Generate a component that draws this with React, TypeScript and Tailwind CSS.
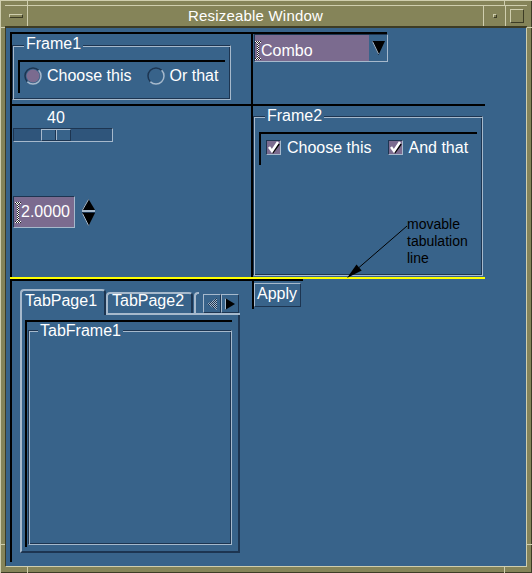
import React from "react";

// Tk-style colours
// blue #38638a, light bevel #a6b9cc, dark bevel #1d3551, entry #7b6b8f

const GROOVE =
  "border border-t-[#1d3551] border-l-[#1d3551] border-b-[#a6b9cc] border-r-[#a6b9cc] shadow-[inset_1px_1px_0_#a6b9cc,inset_-1px_-1px_0_#1d3551]";
const RAISED =
  "border border-t-[#a6b9cc] border-l-[#a6b9cc] border-b-[#1d3551] border-r-[#1d3551]";
const SUNKEN =
  "border border-t-[#1d3551] border-l-[#1d3551] border-b-[#a6b9cc] border-r-[#a6b9cc]";

function Frame({
  label,
  labelClass,
  className,
  children,
}: {
  label: string;
  labelClass: string;
  className: string;
  children?: React.ReactNode;
}) {
  return (
    <div className={`relative ${GROOVE} ${className}`}>
      <span
        className={`absolute px-[2px] bg-[#38638a] text-white text-[16px] leading-[16px] ${labelClass}`}
      >
        {label}
      </span>
      {children}
    </div>
  );
}

function IBeam({ id, h }: { id: string; h: number }) {
  return (
    <svg width="6" height={h} className="shrink-0">
      <defs>
        <pattern id={id} width="2" height="2" patternUnits="userSpaceOnUse">
          <rect width="2" height="2" fill="#222" />
          <rect width="1" height="1" fill="#fff" />
          <rect x="1" y="1" width="1" height="1" fill="#fff" />
        </pattern>
      </defs>
      <path
        d={`M0 0H6V2H4V${h - 2}H6V${h}H0V${h - 2}H2V2H0Z`}
        fill={`url(#${id})`}
      />
    </svg>
  );
}

function Radio({ checked, label }: { checked?: boolean; label: string }) {
  return (
    <div className="flex items-center h-[18px]">
      <svg width="18" height="18" className="shrink-0">
        {checked && <circle cx="9" cy="9" r="6.5" fill="#7b6b8f" />}
        <path d="M3.34 14.66A8 8 0 0 1 14.66 3.34" fill="none" stroke="#1d3551" strokeWidth="1.5" />
        <path d="M14.66 3.34A8 8 0 0 1 3.34 14.66" fill="none" stroke="#a6b9cc" strokeWidth="1.5" />
      </svg>
      <span className="ml-[5px] text-white text-[16px] leading-[16px]">{label}</span>
    </div>
  );
}

function Check({ label }: { label: string }) {
  return (
    <div className="flex items-center h-[15px]">
      <div className={`w-[15px] h-[15px] bg-[#7b6b8f] ${SUNKEN}`}>
        <svg width="13" height="13">
          <polyline points="3,7 6,11 12,3" fill="none" stroke="#000" strokeWidth="2" />
          <polyline points="2,6 5,10 11,1" fill="none" stroke="#fff" strokeWidth="2.5" />
        </svg>
      </div>
      <span className="ml-[6px] text-white text-[16px] leading-[16px]">{label}</span>
    </div>
  );
}

export default function App() {
  return (
    <div className="relative w-[532px] h-[573px] bg-[#858459] flex flex-col px-[5px] pt-[5px] pb-[6px] shadow-[inset_1px_1px_0_#cfceae,inset_-1px_-1px_0_#3d3c25] font-['Liberation_Sans',Arial,sans-serif]">
      {/* frame resize markers */}
      <div className="absolute left-[27px] top-0 w-px h-[5px] bg-[#cfceae]" />
      <div className="absolute left-[504px] top-0 w-px h-[5px] bg-[#cfceae]" />
      <div className="absolute left-0 top-[27px] w-[5px] h-px bg-[#cfceae]" />
      <div className="absolute right-0 top-[27px] w-[5px] h-px bg-[#cfceae]" />
      <div className="absolute left-[27px] bottom-0 w-px h-[6px] bg-[#cfceae]" />
      <div className="absolute left-[504px] bottom-0 w-px h-[6px] bg-[#cfceae]" />
      <div className="absolute left-0 top-[544px] w-[5px] h-px bg-[#cfceae]" />
      <div className="absolute right-0 top-[544px] w-[5px] h-px bg-[#cfceae]" />

      {/* title bar */}
      <div className="h-[22px] flex border-t border-b border-t-[#cfceae] border-b-[#3d3c25]">
        <div className="w-[23px] border-r border-r-[#cfceae] flex items-center justify-center">
          <div className="w-[14px] h-[4px] border border-t-[#cfceae] border-l-[#cfceae] border-b-[#3d3c25] border-r-[#3d3c25]" />
        </div>
        <div className="flex-1 text-center text-white text-[15px] leading-[20px] tracking-[0.2px]">
          Resizeable Window
        </div>
        <div className="w-[22px] border-l border-l-[#cfceae] flex items-center justify-center">
          <div className="w-[4px] h-[4px] border border-t-[#cfceae] border-l-[#cfceae] border-b-[#3d3c25] border-r-[#3d3c25]" />
        </div>
        <div className="w-[22px] border-l border-l-[#cfceae] flex items-center justify-center">
          <div className="w-[14px] h-[14px] border border-t-[#cfceae] border-l-[#cfceae] border-b-[#3d3c25] border-r-[#3d3c25]" />
        </div>
      </div>

      {/* client area */}
      <div className="flex-1 bg-[#38638a] border border-t-[#3d3c25] border-l-[#3d3c25] border-b-[#cfceae] border-r-[#cfceae] pl-[4px] pt-[4px]">
        <div className="w-[475px] flex flex-col">
          {/* row 1 */}
          <div className="flex h-[72px] border-l-2 border-black">
            <div className="w-[241px] border-t-2 border-r-2 border-black">
              <Frame label="Frame1" labelClass="top-[-10px] left-[11px]" className="mt-[11px] w-[219px] h-[55px]">
                <div className="ml-[5px] mt-[14px] w-[207px] h-[33px] border-t-2 border-l-2 border-black pl-[4px] pt-[5px] flex items-start">
                  <Radio checked label="Choose this" />
                  <div className="ml-[15px]">
                    <Radio label="Or that" />
                  </div>
                </div>
              </Frame>
            </div>
            <div className="w-[134px] border-t-2 border-black">
              <div className={`ml-px w-[134px] h-[28px] flex ${SUNKEN}`}>
                <div className="w-[114px] bg-[#7b6b8f] flex items-end pb-[1px]">
                  <IBeam id="ib1" h={19} />
                  <span className="text-white text-[16px] leading-[16px] pb-[1px]">Combo</span>
                </div>
                <div className="flex-1 flex items-center justify-center">
                  <svg width="13" height="14">
                    <polygon points="0,0 13,0 6.5,14" fill="#000" />
                    <line x1="0.5" y1="0.5" x2="6.5" y2="13" stroke="#a6b9cc" strokeWidth="1" />
                  </svg>
                </div>
              </div>
            </div>
          </div>

          {/* row 2 */}
          <div className="relative flex h-[173px] border-l-2 border-t-2 border-black">
            <div className="w-[241px] border-r-2 border-black flex flex-col">
              <div className="mt-[4px] ml-px w-[100px] pl-[34px] text-white text-[16px] leading-[16px]">40</div>
              <div className={`ml-px mt-[2px] w-[100px] h-[14px] bg-[#2f557b] flex ${SUNKEN}`}>
                <div className={`ml-[27px] w-[30px] h-full bg-[#38638a] flex ${RAISED}`}>
                  <div className="w-[14px] border-r border-r-[#1d3551]" />
                  <div className="w-px bg-[#a6b9cc]" />
                </div>
              </div>
              <div className="mt-[54px] ml-px flex items-center">
                <div className={`w-[62px] h-[32px] bg-[#7b6b8f] flex items-center pl-[1px] ${SUNKEN}`}>
                  <IBeam id="ib2" h={21} />
                  <span className="text-white text-[16px] leading-[16px]">2.0000</span>
                </div>
                <svg width="13" height="27" className="ml-[7px]">
                  <polygon points="6.5,0 13,11 0,11" fill="#000" />
                  <line x1="6.5" y1="0.5" x2="0.5" y2="11" stroke="#a6b9cc" strokeWidth="1" />
                  <rect x="0" y="11" width="13" height="2" fill="#a6b9cc" />
                  <rect x="0" y="13" width="13" height="1" fill="#1d3551" />
                  <polygon points="0,14 13,14 6.5,27" fill="#000" />
                  <line x1="0.5" y1="14.5" x2="6.5" y2="26.5" stroke="#a6b9cc" strokeWidth="1" />
                </svg>
              </div>
            </div>
            <div className="flex-1">
              <Frame label="Frame2" labelClass="top-[-9px] left-[11px]" className="mt-[10px] w-[230px] h-[160px]">
                <div className="ml-[5px] mt-[15px] w-[218px] h-[33px] border-t-2 border-l-2 border-black pl-[5px] pt-[6px] flex items-start">
                  <Check label="Choose this" />
                  <div className="ml-[16px]">
                    <Check label="And that" />
                  </div>
                </div>
              </Frame>
            </div>

            {/* annotation */}
            <div className="absolute left-[395px] top-[110px] text-black text-[14px] leading-[17px]">
              movable
              <br />
              tabulation
              <br />
              line
            </div>
            <svg width="66" height="56" className="absolute left-[333px] top-[118px]">
              <line x1="62" y1="2" x2="14" y2="43.5" stroke="#000" strokeWidth="1" />
              <polygon points="2,54 16.7,46.5 11.5,40.5" fill="#000" />
            </svg>
          </div>

          {/* movable tabulation line */}
          <div className="h-[2px] w-[475px] bg-[#ffff00]" />

          {/* row 3 */}
          <div className="flex h-[283px] border-l-2 border-black">
            <div className="w-[240px] border-t-2 border-black">
              <div className="ml-[8px] mt-[8px] w-[220px] flex flex-col">
                <div className="flex items-end h-[26px]">
                  <div className="w-[86px] h-[26px] border-t-2 border-l-2 border-r-2 border-t-[#a6b9cc] border-l-[#a6b9cc] border-r-[#1d3551] rounded-t-[4px] pl-[3px] pt-[2px] text-white text-[16px] leading-[16px]">
                    TabPage1
                  </div>
                  <div className="flex-1 h-[24px] flex items-end border-b-2 border-b-[#a6b9cc]">
                    <div className="w-[87px] h-[21px] border-t-2 border-l-2 border-r-2 border-t-[#a6b9cc] border-l-[#a6b9cc] border-r-[#1d3551] rounded-t-[4px] pl-[4px] text-white text-[16px] leading-[13px]">
                      TabPage2
                    </div>
                    <div className="ml-[1px] w-[5px] h-[21px] border-t-2 border-l-2 border-[#a6b9cc] rounded-tl-[4px]" />
                    <div className={`ml-[4px] w-[18px] h-[19px] flex items-center justify-center ${RAISED}`}>
                      <svg width="10" height="12">
                        <defs>
                          <pattern id="stip" width="2" height="2" patternUnits="userSpaceOnUse">
                            <rect width="2" height="2" fill="#1d3551" />
                            <rect width="1" height="1" fill="#a6b9cc" />
                            <rect x="1" y="1" width="1" height="1" fill="#a6b9cc" />
                          </pattern>
                        </defs>
                        <polygon points="0,6 10,0 10,12" fill="url(#stip)" />
                      </svg>
                    </div>
                    <div className={`w-[18px] h-[19px] flex items-center justify-center ${RAISED}`}>
                      <svg width="10" height="12">
                        <polygon points="0,0 10,6 0,12" fill="#000" />
                        <line x1="0.5" y1="0.5" x2="0.5" y2="11.5" stroke="#a6b9cc" strokeWidth="1" />
                      </svg>
                    </div>
                  </div>
                </div>
                <div className="w-[220px] h-[238px] border-l-2 border-r-2 border-b-2 border-l-[#a6b9cc] border-r-[#1d3551] border-b-[#1d3551] pl-[3px] pt-[5px]">
                  <div className="w-[207px] h-[227px] border-t-2 border-l-2 border-black">
                    <Frame label="TabFrame1" labelClass="top-[-8px] left-[9px]" className="ml-px mt-[8px] w-[204px] h-[215px]" />
                  </div>
                </div>
              </div>
            </div>
            <div className="w-[51px] h-[30px] border-t-2 border-l-2 border-black">
              <div className={`mt-[2px] w-[47px] h-[24px] pl-[2px] pt-[2px] text-white text-[16px] leading-[16px] ${RAISED}`}>
                Apply
              </div>
            </div>
          </div>
        </div>
      </div>
    </div>
  );
}
